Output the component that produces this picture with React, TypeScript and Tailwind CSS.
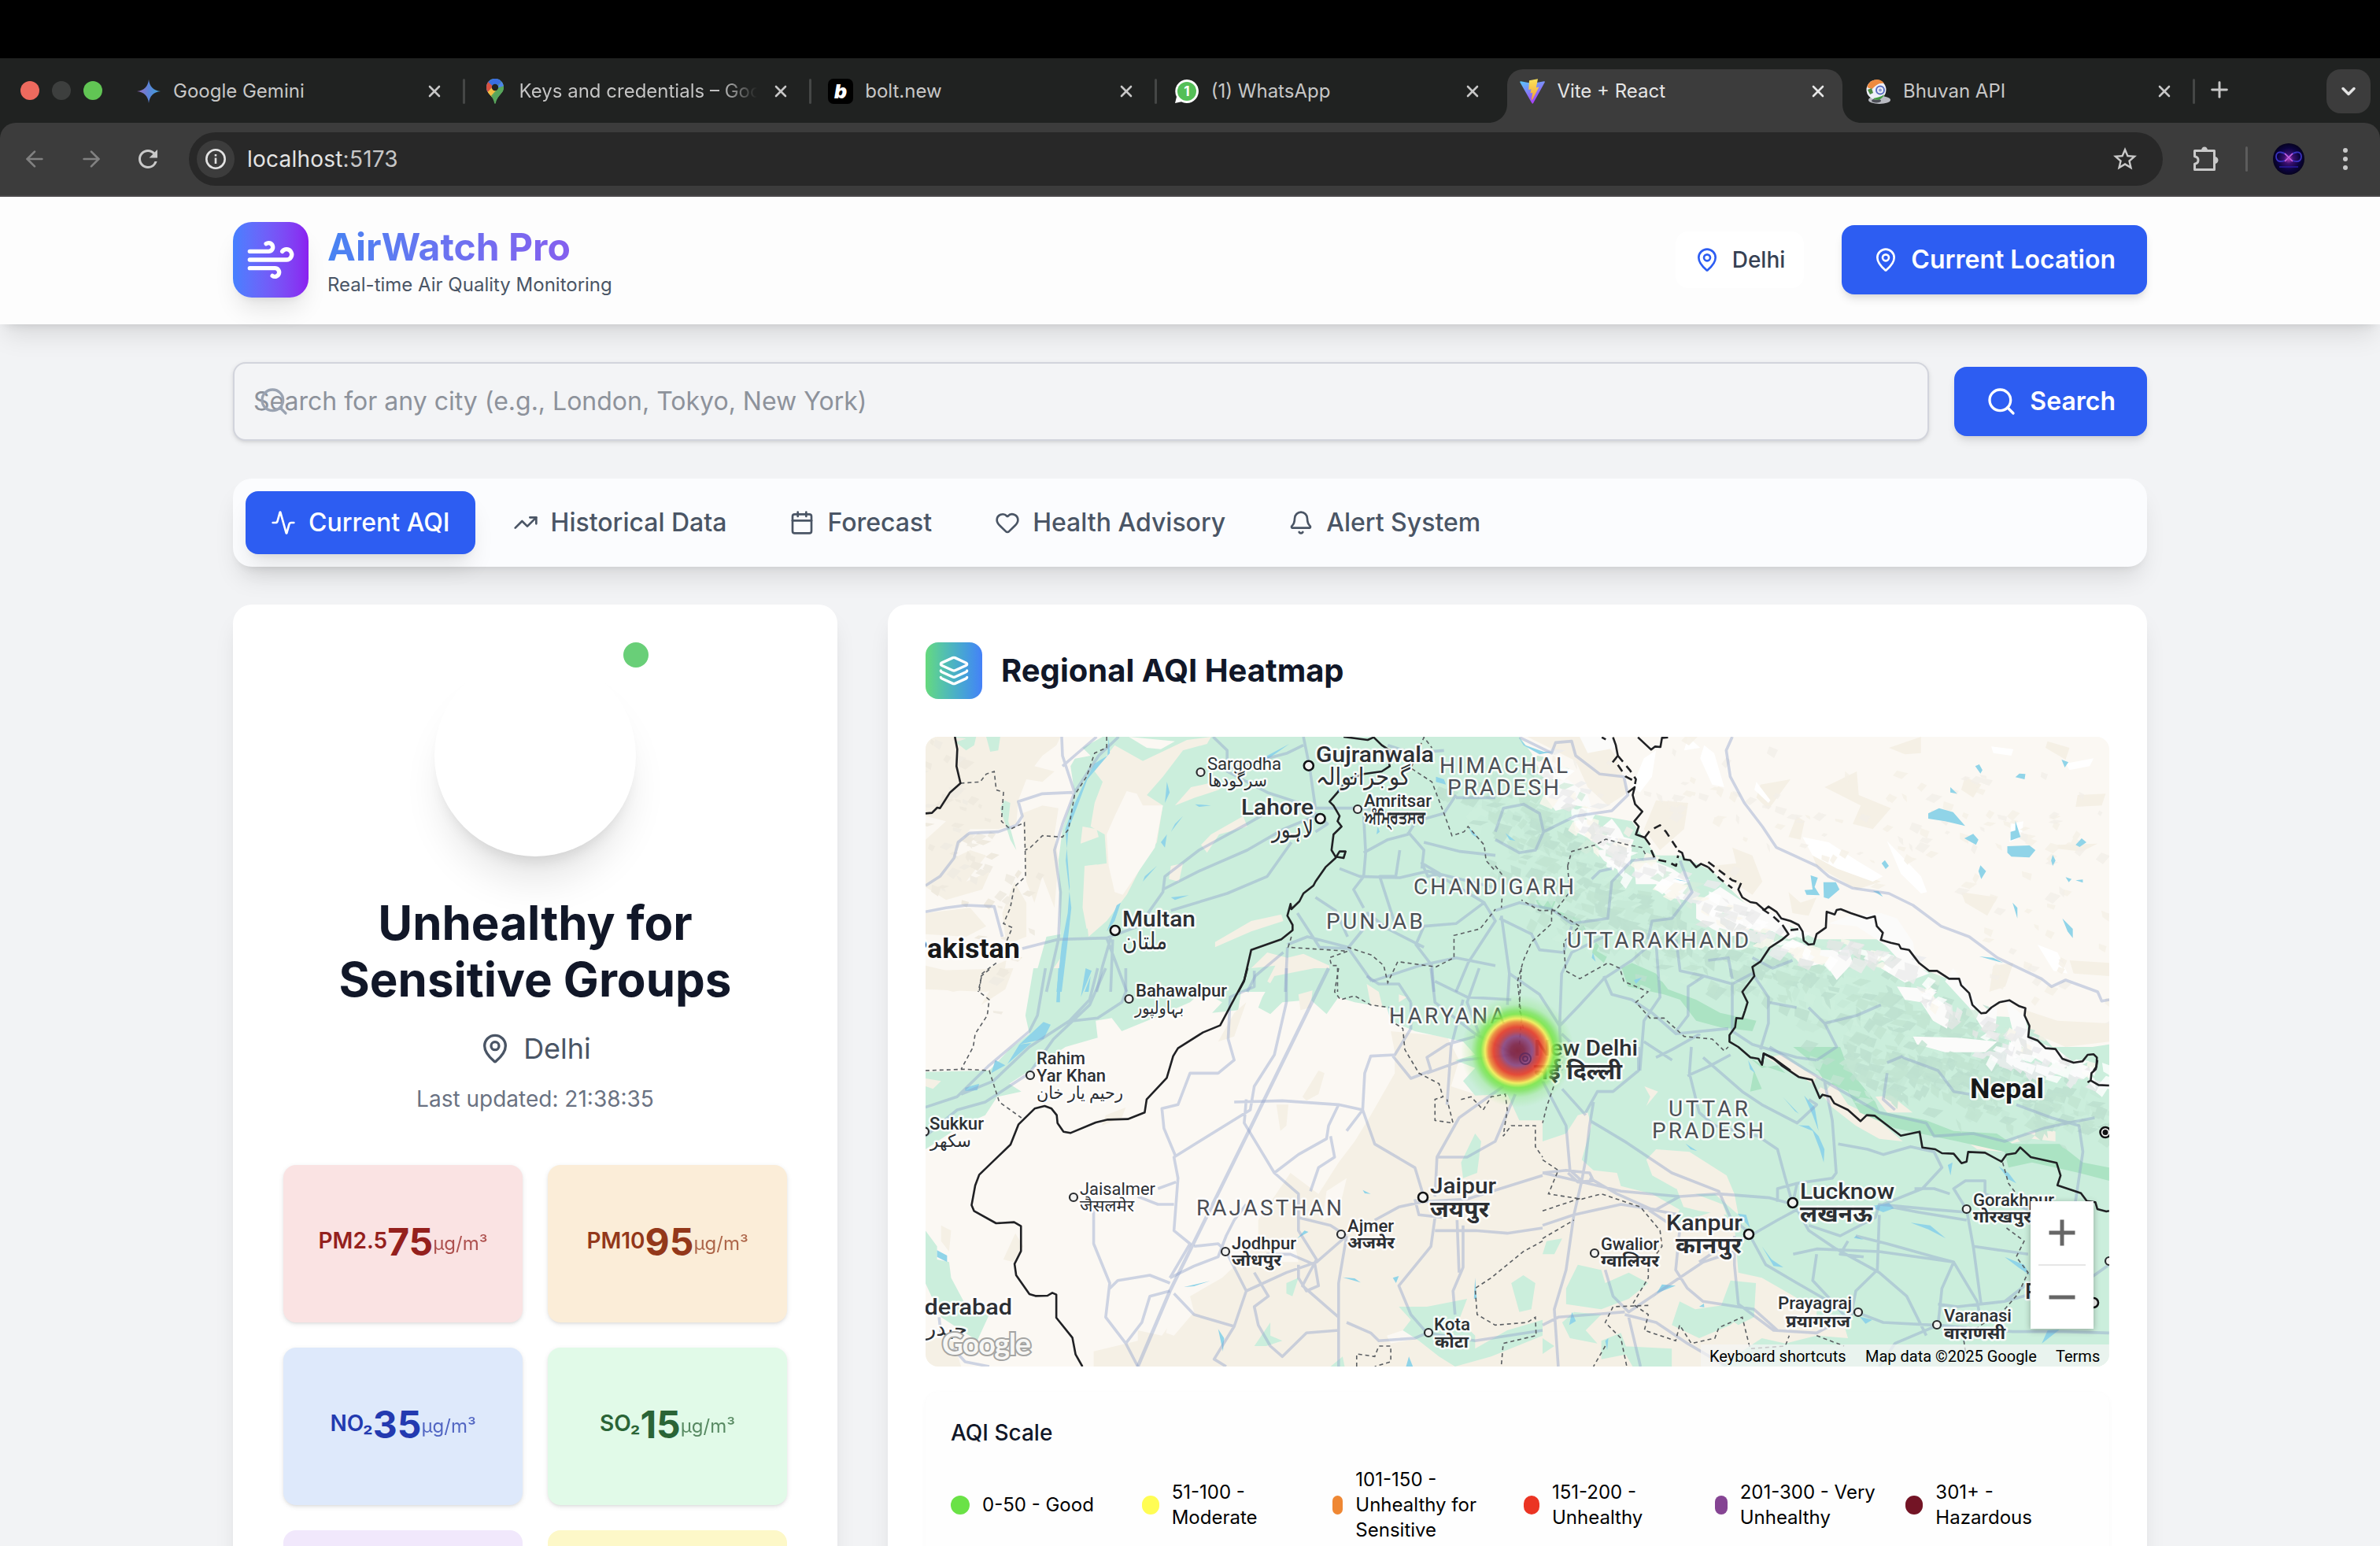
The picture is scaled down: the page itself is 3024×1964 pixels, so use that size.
import React from "react";
import {
  Activity,
  ArrowLeft,
  ArrowRight,
  Bell,
  Calendar,
  ChevronDown,
  Heart,
  Layers,
  MapPin,
  Plus,
  Search,
  TrendingUp,
  Wind,
  X,
} from "lucide-react";
import { MdRefresh, MdStarBorder } from "react-icons/md";

/* ------------------------------------------------------------------ */
/* Browser chrome                                                      */
/* ------------------------------------------------------------------ */

function GeminiIcon() {
  return (
    <svg viewBox="0 0 32 32" className="size-8">
      <defs>
        <linearGradient id="gem" x1="0" y1="0" x2="1" y2="0">
          <stop offset="0" stopColor="#9a6cc0" />
          <stop offset="0.5" stopColor="#5b84d8" />
          <stop offset="1" stopColor="#3fa3d8" />
        </linearGradient>
      </defs>
      <path d="M16 1C17 10 22 15 31 16C22 17 17 22 16 31C15 22 10 17 1 16C10 15 15 10 16 1Z" fill="url(#gem)" />
    </svg>
  );
}

function MapsIcon() {
  return (
    <svg viewBox="0 0 32 32" className="size-8">
      <clipPath id="pinclip">
        <path d="M16 0C9.6 0 5 4.8 5 11C5 15.500 7.500 18 10.500 21.500C13.500 25 14.500 28 15 30.500C15.300 32.300 16.700 32.300 17 30.500C17.500 28 18.500 25 21.500 21.500C24.500 18 27 15.500 27 11C27 4.800 22.400 0 16 0Z" />
      </clipPath>
      <g clipPath="url(#pinclip)">
        <rect width="32" height="32" fill="#58a55c" />
        <path d="M4 22L25 0H0V22Z" fill="#4d83ec" />
        <path d="M7 2L16 11L4 24H0V2Z" fill="#d95140" />
        <path d="M5 19L14 10L21 13L9 27Z" fill="#f2bd42" />
        <path d="M16 11L26 1L30 12L17 28L10 21Z" fill="#58a55c" opacity="0.95" />
        <path d="M5 19L12 11L18 14L9 24Z" fill="#f2bd42" />
        <path d="M7 4L16 12L25 3L16 -1Z" fill="#3a6ee0" />
        <path d="M18 12L25 3L28 9Z" fill="#4d83ec" />
      </g>
      <circle cx="16" cy="11" r="4.200" fill="#202221" />
    </svg>
  );
}

function BoltIcon() {
  return (
    <div className="flex size-8 items-center justify-center rounded-[7px] bg-black font-['Inter'] text-[25px] font-black text-white italic leading-none">
      b
    </div>
  );
}

function WhatsAppIcon() {
  return (
    <svg viewBox="0 0 32 32" className="size-8">
      <path d="M16 1A15 15 0 1 1 9 29.300L1 31L3 23A15 15 0 0 1 16 1Z" fill="#fff" />
      <circle cx="16" cy="16" r="12" fill="#54bf57" />
      <text x="16" y="22" textAnchor="middle" fontFamily="Inter" fontSize="17" fontWeight="700" fill="#fff">
        1
      </text>
    </svg>
  );
}

function ViteIcon() {
  return (
    <svg viewBox="0 0 32 32" className="size-8">
      <defs>
        <linearGradient id="viteA" x1="0" y1="0" x2="0.5" y2="1">
          <stop offset="0" stopColor="#58c8fb" />
          <stop offset="1" stopColor="#a93ef5" />
        </linearGradient>
        <linearGradient id="viteB" x1="0.5" y1="0" x2="0.5" y2="1">
          <stop offset="0" stopColor="#fbe35a" />
          <stop offset="1" stopColor="#f2a43a" />
        </linearGradient>
      </defs>
      <path d="M31.800 4.500L17 31.300C16.700 31.900 15.900 31.900 15.500 31.300L0.300 4.500C0 3.900 0.500 3.200 1.200 3.300L16 6L30.900 3.300C31.600 3.200 32.200 3.900 31.800 4.500Z" fill="url(#viteA)" />
      <path d="M23 0.200L12 2.300L11.300 14L14.500 13.300L13.500 18.500L16.300 17.700L14.800 26.500L16 26.800L24.500 10.500L20.800 11.200Z" fill="url(#viteB)" />
    </svg>
  );
}

function BhuvanIcon() {
  return (
    <svg viewBox="0 0 32 32" className="size-8">
      <ellipse cx="17" cy="27" rx="14" ry="5" fill="#b9bbc2" />
      <ellipse cx="13" cy="28" rx="6" ry="2.500" fill="#4b4d55" />
      <circle cx="13" cy="14" r="12.500" fill="#eef0f8" />
      <path d="M1.500 11A12 12 0 0 1 23 6C16 5 12 9 8 13L4 12Z" fill="#ee8a3e" />
      <path d="M2 14L7 12L9 18L5 20Z" fill="#4d8a44" />
      <path d="M9 25C14 24 19 23 23 20C20 28 12 28 9 25Z" fill="#3f9a3f" />
      <circle cx="18" cy="14.500" r="5" fill="none" stroke="#5a6ec0" strokeWidth="2" />
      <circle cx="18" cy="14.500" r="2" fill="#8d9bd8" />
    </svg>
  );
}

type Tab = { title: string; icon: React.ReactNode; active?: boolean; divider?: boolean };

const tabs: Tab[] = [
  { title: "Google Gemini", icon: <GeminiIcon />, divider: true },
  { title: "Keys and credentials – Goo", icon: <MapsIcon />, divider: true },
  { title: "bolt.new", icon: <BoltIcon />, divider: true },
  { title: "(1) WhatsApp", icon: <WhatsAppIcon /> },
  { title: "Vite + React", icon: <ViteIcon />, active: true },
  { title: "Bhuvan API", icon: <BhuvanIcon />, divider: true },
];

function BrowserTab({ tab }: { tab: Tab }) {
  return (
    <div className="flex h-[68px] w-[439.600px] shrink-0 items-center">
      <div
        className={
          tab.active
            ? "relative flex h-full w-[426px] items-center rounded-t-[20px] bg-[#3c3c3c] pr-[17px] pl-4 text-[#e6e6e6]"
            : "flex h-full w-[426px] items-center pr-[17px] pl-4 text-[#c7c7c7]"
        }
      >
        {tab.active && (
          <>
            <svg viewBox="0 0 24 24" className="absolute bottom-0 -left-6 size-6">
              <path d="M24 0V24H0C14 24 24 14 24 0Z" fill="#3c3c3c" />
            </svg>
            <svg viewBox="0 0 24 24" className="absolute -right-6 bottom-0 size-6">
              <path d="M0 0V24H24C10 24 0 14 0 0Z" fill="#3c3c3c" />
            </svg>
          </>
        )}
        <div className="-mt-3 size-8 shrink-0">{tab.icon}</div>
        <div
          className={
            tab.title.startsWith("Keys")
              ? "-mt-3 ml-[15px] w-[302px] overflow-hidden bg-gradient-to-r from-[#c7c7c7] from-85% to-transparent bg-clip-text text-[24px] leading-8 whitespace-nowrap text-transparent"
              : "-mt-3 ml-[15px] w-[302px] overflow-hidden text-[24px] leading-8 whitespace-nowrap"
          }
        >
          {tab.title}
        </div>
        <X className="-mt-3 ml-[18px] size-6 shrink-0" strokeWidth={2.600} />
      </div>
      {tab.divider && <div className="-mt-3 ml-[5px] h-8 w-[3px] rounded bg-[#454746]" />}
    </div>
  );
}

function BrowserChrome() {
  return (
    <div className="shrink-0 font-['Inter']">
      <div className="h-[74px] bg-black" />
      <div className="flex h-[82px] items-end bg-[#202221]">
        <div className="flex h-[82px] w-[157px] shrink-0 items-center gap-4 pl-[26px]">
          <div className="size-6 rounded-full bg-[#ed6a5e]" />
          <div className="size-6 rounded-full bg-[#3d3f3e]" />
          <div className="size-6 rounded-full bg-[#61c554]" />
        </div>
        {tabs.map((tab) => (
          <BrowserTab key={tab.title} tab={tab} />
        ))}
        <div className="flex h-[68px] flex-1 items-start justify-between pr-3">
          <Plus className="mt-[10px] ml-[9px] size-8 text-[#c7c7c7]" strokeWidth={2.200} />
          <div className="flex size-14 items-center justify-center rounded-[18px] bg-[#3c3c3c]">
            <ChevronDown className="size-7 text-[#e3e3e3]" strokeWidth={3} />
          </div>
        </div>
      </div>
      <div className="bg-[#202221]">
        <div className="flex h-[94px] items-center rounded-t-[20px] border-b-2 border-[#4a484a] bg-[#3c3c3c]">
          <ArrowLeft className="ml-7 size-8 text-[#818181]" strokeWidth={2} />
          <ArrowRight className="ml-10 size-8 text-[#818181]" strokeWidth={2} />
          <MdRefresh className="ml-[38px] size-9 text-[#c9c9c9]" />
          <div className="ml-[34px] flex h-[68px] w-[2508px] items-center rounded-full bg-[#282828] pr-[30px] pl-[10px]">
            <div className="flex size-12 items-center justify-center rounded-full bg-[#3c3c3c]">
              <svg viewBox="0 0 28 28" className="size-7" fill="none" stroke="#e3e3e3" strokeWidth="2.600">
                <circle cx="14" cy="14" r="11.700" />
                <path d="M14 12.500V20M14 8V10.600" />
              </svg>
            </div>
            <div className="ml-4 text-[28px] leading-9 tracking-[0.22px] text-[#c7c7c7]">
              <span className="text-[#e3e3e3]">localhost</span>:5173
            </div>
            <MdStarBorder className="ml-auto size-9 text-[#c9c9c9]" />
          </div>
          <svg viewBox="0 0 36 36" className="ml-[36px] size-9" fill="none">
            <path
              d="M4.500 7.500H29.500V31.500H4.500V24.200C7.200 23.800 9 22 9 19.500C9 17 7.200 15.200 4.500 14.800Z"
              stroke="#c9c9c9"
              strokeWidth="3"
              strokeLinejoin="round"
            />
            <path d="M13 7A4 4.500 0 0 1 21 7ZM30 15A4.500 4.500 0 0 1 30 24Z" fill="#c9c9c9" />
          </svg>
          <div className="ml-[33px] h-8 w-[3px] rounded bg-[#5c5c5c]" />
          <svg viewBox="0 0 40 40" className="ml-8 size-10">
            <defs>
              <radialGradient id="ava">
                <stop offset="0" stopColor="#b23fb5" />
                <stop offset="0.300" stopColor="#3a0f70" />
                <stop offset="0.700" stopColor="#0b0440" />
                <stop offset="1" stopColor="#06021f" />
              </radialGradient>
            </defs>
            <circle cx="20" cy="20" r="20" fill="url(#ava)" />
            <path d="M20 18C15 11 4 8 4 17C4 26 15 24 20 18C25 11 36 8 36 17C36 26 25 24 20 18Z" fill="none" stroke="#3a32c0" strokeWidth="1.800" />
            <path d="M15 23L25 13M15 13L25 23" stroke="#d05fd8" strokeWidth="1.600" />
            <path d="M8 30H32" stroke="#2a1aa0" strokeWidth="1.500" />
          </svg>
          <div className="ml-[49px] flex flex-col gap-[5px]">
            <div className="size-[6px] rounded-full bg-[#c9c9c9]" />
            <div className="size-[6px] rounded-full bg-[#c9c9c9]" />
            <div className="size-[6px] rounded-full bg-[#c9c9c9]" />
          </div>
        </div>
      </div>
    </div>
  );
}

/* ------------------------------------------------------------------ */
/* Map                                                                 */
/* ------------------------------------------------------------------ */

/* The map's vector data is stored in four sectors, each with its own grid. */
const NW = "translate(1100 760) scale(0.5102 0.33333)";
const NE = "translate(1900 900) scale(0.5102 0.33333)";
const SW = "translate(1160 1230) scale(0.5102 0.33333)";
const SE = "translate(1960 1330) scale(0.49745 0.33333)";

type Fill = { t: string; c: string; d: string };

const LAND = "#fbf8f3";
const SAND = "#f5f0e5";
const GREEN = "#cbeedc";
const FOREST = "#abe3c3";
const WATER = "#90d4e8";
const SNOW = "#fbfbfa";

const fills: Fill[] = [
  { t: NW, c: SAND, d: "M149,528 485,528 475,560 440,600 420,640 470,660 440,700 400,690 380,770 375,860 330,880 260,880 240,920 220,990 260,960 300,980 250,1080 310,1040 290,1110 200,1150 149,1100 149,920 200,850 149,830ZM390,820 440,790 480,800 470,900 480,1000 470,1180 440,1060 420,1160 400,1080ZM340,1200 370,1080 400,1160 400,1290 350,1320ZM149,1200 260,1180 300,1250 250,1290 149,1280ZM149,1400 260,1440 350,1380 340,1480 300,1500 149,1490Z" },
  { t: NW, c: GREEN, d: "M540,560 575,528 1568,528 1568,1500 690,1500 740,1460 800,1420 850,1440 830,1500 410,1500 430,1400 450,1290 485,1280 480,1000 490,880 520,740 510,640ZM220,528 275,528 270,560 250,580 225,550ZM300,528 335,528 330,580 310,585ZM345,770 360,780 355,850 375,960 360,920 335,800Z" },
  { t: NW, c: SAND, d: "M600,600 620,560 690,620 800,540 860,528 850,555 790,580 740,680 700,750 740,790 725,930 690,1010 650,1130 600,1230 555,1290 545,1170 560,1100 555,1020 600,1010 595,900 560,870 570,780 590,700 570,660Z" },
  { t: NW, c: LAND, d: "M600,900 620,830 650,735 675,745 690,790 740,790 720,950 640,1130 620,1120 605,1020ZM655,528 770,545 735,575 700,570ZM490,620 500,570 560,528 590,528 540,570 560,600ZM740,1460 800,1420 850,1440 830,1500 700,1500Z" },
  { t: NW, c: SAND, d: "M760,1020 790,1010 780,1080 755,1070ZM835,940 860,900 940,830 950,870 880,900 850,970ZM810,720 870,700 880,730 820,760 770,790ZM870,1310 960,1230 1035,1205 1040,1230 960,1270 870,1330ZM1050,1370 1090,1355 1155,1400 1150,1440 1080,1430 1020,1480 1000,1460 1020,1400 960,1410 1000,1350ZM540,870 575,880 580,910 535,935ZM545,1020 575,1015 600,1060 580,1240 550,1260 540,1180ZM455,1440 490,1360 485,1500 455,1450Z" },
  { t: SW, c: GREEN, d: "M300,0 630,0 700,20 740,60 690,130 600,190 520,240 495,190 455,200 460,265 380,300 330,350 240,440 270,470 210,490 180,560 120,600 31,690 31,395 190,390 240,310 290,250 280,180ZM670,0 870,0 820,60 810,160 745,170 770,130 690,60Z" },
  { t: SW, c: SAND, d: "M31,10 250,0 230,80 170,140 200,60 100,90 31,60ZM760,280 800,170 830,130 800,260ZM480,560 530,530 520,570 470,600ZM970,490 1010,390 1025,400 1010,480 980,505ZM905,520 935,520 930,600 915,620ZM70,980 95,1000 90,1080 70,1040ZM225,1110 255,1010 275,1060 250,1120Z" },
  { t: SW, c: SAND, d: "M1190,240 1330,260 1360,350 1340,450 1400,480 1480,490 1568,580 1568,1518 450,1518 450,1460 560,1420 560,1380 620,1400 690,1250 770,1180 860,1050 860,960 940,780 1010,860 1060,740 1100,660 1140,560 1170,480 1200,400 1200,320Z" },
  { t: SW, c: LAND, d: "M640,1330 690,1250 700,1310 650,1400 630,1390ZM890,1080 950,1040 960,1120 880,1120ZM1180,1400 1240,1370 1260,1410 1190,1430ZM1030,850 1080,800 1060,930 1020,960Z" },
  { t: SW, c: GREEN, d: "M870,110 900,30 1000,0 1568,0 1568,580 1510,580 1480,480 1400,485 1370,430 1400,380 1350,350 1400,330 1370,280 1250,240 1190,200 1180,150 1100,130 1060,110 1030,175 990,120 920,130 890,175 860,150ZM1365,740 1400,630 1415,660 1405,780 1370,800ZM930,1200 960,1180 945,1250 930,1240ZM1210,1290 1280,1290 1380,1260 1360,1340 1400,1400 1400,1450 1480,1380 1568,1340 1568,1400 1440,1480 1350,1518 1310,1480 1260,1420 1220,1380 1240,1340ZM1490,1200 1520,1170 1550,1200 1540,1300 1510,1310ZM850,1440 890,1350 890,1400 920,1420 880,1440ZM31,1000 60,1060 60,1110 90,1120 95,1180 130,1280 190,1320 160,1420 70,1330 31,1200ZM1040,1518 1070,1480 1075,1518Z" },
  { t: SW, c: SAND, d: "M960,100 995,85 990,150 965,160ZM1130,60 1160,90 1170,150 1140,140ZM1210,100 1230,110 1210,130ZM31,1400 100,1420 120,1518 31,1518ZM30,420 70,430 50,460 31,450Z" },
  { t: NE, c: GREEN, d: "M0,108 60,108 90,170 130,300 220,330 230,400 340,430 400,560 460,560 540,620 620,740 720,820 800,880 950,880 1040,980 1160,1050 1210,1170 1320,1180 1400,1310 1529,1280 1529,1380 0,1380Z" },
  { t: NE, c: SAND, d: "M400,350 480,360 470,460 410,540 370,460ZM590,530 640,560 665,660 640,710 570,640 540,600 600,590ZM820,300 900,240 905,330 985,380 940,460 890,440 910,370ZM660,290 735,270 680,385 650,340ZM790,560 860,600 960,660 900,690 800,600ZM1160,700 1250,720 1225,790 1170,740ZM1170,260 1210,290 1190,340 1160,310ZM1450,330 1520,325 1510,370 1445,375ZM1375,125 1430,150 1420,195 1370,150ZM1400,520 1500,515 1460,545 1400,535ZM980,150 1060,108 1060,170 1020,175ZM1320,1150 1400,1190 1529,1200 1529,1270 1420,1290 1330,1230ZM1430,960 1529,970 1529,1020 1440,1010ZM730,700 760,740 800,720 780,790 740,780ZM80,108 260,108 300,180 330,320 280,370 230,300 200,200ZM1240,980 1290,970 1270,1060 1230,1080ZM750,410 770,430 760,500 730,490Z" },
  { t: NE, c: "#ffffff", d: "M520,140 545,170 570,300 540,290 510,190ZM650,280 685,350 680,360 645,310ZM765,490 830,510 900,580 965,640 940,660 850,610 790,560ZM975,505 1010,560 1060,640 1075,700 1060,705 1010,630ZM1235,145 1290,155 1285,180 1240,170ZM1420,210 1490,190 1480,220 1430,235ZM1350,900 1400,930 1425,1010 1390,1000ZM1285,440 1315,430 1310,490 1280,510ZM480,108 510,150 470,160ZM370,190 400,160 390,260 360,320 340,300Z" },
  { t: SE, c: GREEN, d: "M0,0 1447,0 1447,1218 0,1218Z" },
  { t: SE, c: SAND, d: "M0,360 60,330 90,260 115,250 125,300 100,430 130,470 190,480 200,530 280,560 350,620 330,680 450,620 490,680 500,860 560,880 630,940 700,1000 700,1060 770,1060 780,1110 700,1100 620,1130 560,1110 450,1218 0,1218ZM265,430 290,390 375,400 470,490 490,560 500,640 440,560 390,560 340,540 280,490ZM340,530 390,560 460,600 470,640 400,625 360,610ZM260,150 295,170 265,225 275,190Z" },
  { t: SE, c: GREEN, d: "M60,920 90,830 150,850 160,900 220,860 270,900 220,960 150,1000 60,980ZM80,1010 150,1020 110,1080 140,1130 70,1110 50,1050ZM350,970 390,1000 480,980 530,1000 480,1060 400,1110 330,1060ZM150,1120 200,1090 220,1170 150,1190ZM10,740 50,730 30,790 0,790ZM480,890 545,900 540,1030 500,1060 450,1010ZM200,1140 330,1150 330,1218 230,1218ZM560,1140 640,1130 620,1218 540,1218ZM0,1110 30,1140 0,1170Z" },
  { t: SE, c: SAND, d: "M570,40 610,30 670,90 740,130 780,220 850,270 920,360 860,350 800,300 740,230 690,140ZM850,190 890,185 945,250 880,250ZM1060,335 1130,350 1175,400 1110,390ZM1190,370 1240,325 1310,320 1310,360 1250,350Z" },
  { t: SE, c: FOREST, d: "M640,0 760,0 780,80 850,210 860,245 980,280 1050,320 1160,330 1200,370 1320,370 1380,440 1447,460 1447,510 1370,480 1250,440 1190,460 1180,400 1060,360 900,310 810,250 780,170 720,130 690,60ZM540,90 560,160 530,170ZM520,30 560,80 600,70 620,100 560,70Z" },
  { t: NE, c: FOREST, d: "M315,990 340,970 400,1010 430,1070 500,1110 560,1160 650,1190 640,1230 560,1215 500,1190 460,1110 420,1090 330,1060ZM150,770 210,800 235,870 190,840ZM250,890 280,940 270,970 240,930ZM100,730 150,735 140,770 110,760ZM770,1290 830,1290 870,1380 800,1380Z" },
];

const snowfields =
  "M195,430 240,420 260,460 290,420 310,460 320,490 345,500 335,540 300,560 260,530 240,500 200,470ZM250,540 340,530 335,600 310,620 270,580ZM345,590 400,585 440,610 480,650 490,700 470,730 430,720 400,670 350,670ZM120,290 180,270 230,330 240,380 200,370 150,390 125,340ZM210,108 290,108 300,150 230,170ZM500,740 560,680 620,740 720,800 750,870 730,880 690,850 640,830 620,860 580,870 540,840 500,800ZM700,920 740,880 800,920 880,920 890,970 850,1035 820,970 790,980 760,980 740,930ZM830,820 880,790 960,780 1000,800 1040,890 1050,980 1080,1010 1020,1045 960,990 1000,950 970,900 900,830ZM1000,1060 1050,1065 1135,1140 1125,1220 1090,1190 1060,1120 1020,1110ZM1140,990 1170,1050 1210,1150 1250,1140 1245,1230 1215,1225 1180,1140 1120,1040ZM1040,1250 1150,1255 1250,1270 1220,1310 1120,1310 1050,1280ZM1270,1110 1320,1180 1330,1260 1400,1300 1440,1350 1400,1380 1330,1320 1270,1340 1290,1240Z";

const water: Fill[] = [
  { t: NW, c: WATER, d: "M605,528 602,600 570,630 545,700 518,790 497,880 503,1000 508,1100 503,1200 488,1320 475,1500 488,1500 502,1320 512,1180 498,1000 505,880 530,780 552,690 580,640 608,590ZM1055,555 1000,600 950,645 990,625ZM750,700 757,740 745,780ZM750,900 745,950 735,930ZM770,860 790,830 760,890ZM820,785 860,790 830,795ZM725,1020 690,1080 680,1120 695,1060ZM760,1140 805,1132 770,1150ZM560,1440 545,1500 555,1500ZM600,1270 625,1170 635,1160 620,1230ZM1420,680 1440,690 1445,710 1420,700ZM1500,870 1530,920 1510,900ZM1275,870 1280,890 1272,900Z" },
  { t: SW, c: WATER, d: "M362,0 357,130 366,130 368,0ZM430,0 418,110 445,10ZM325,205 343,215 325,270 265,290ZM265,290 295,285 235,365ZM205,350 230,370 195,400ZM130,455 165,440 160,465 130,468ZM60,1075 85,1095 85,1120 60,1100ZM975,1000 985,1005 957,1030ZM1120,845 1140,860 1125,858ZM675,1215 740,1192 700,1212ZM1070,1178 1100,1182 1115,1198ZM1195,1180 1210,1173 1203,1200ZM760,1375 775,1410 772,1460ZM1235,1480 1245,1518 1228,1518ZM1400,1180 1397,1260 1404,1260Z" },
  { t: NE, c: WATER, d: "M1078,400 1105,380 1140,395 1170,448 1120,430 1078,420ZM1275,525 1330,522 1345,540 1330,568 1285,565 1275,550ZM1295,428 1308,490 1283,503 1283,470 1295,465ZM1168,495 1190,478 1203,500 1197,520ZM1445,520 1460,495 1472,510 1455,528ZM817,662 848,662 857,690 830,725 818,720ZM785,636 803,645 795,680 808,712 775,710 770,692 790,690ZM1208,598 1222,620 1210,650 1203,620ZM1288,740 1300,760 1300,800ZM1412,800 1438,840 1438,875 1425,850ZM1195,220 1205,213 1213,235 1208,248ZM1295,262 1305,248 1320,250 1318,270ZM1410,195 1427,205 1418,225ZM1133,300 1150,325 1133,320ZM962,590 970,578 980,600 972,612ZM1205,945 1240,950 1265,970ZM1388,558 1395,580 1388,600 1384,580ZM1420,643 1435,650 1428,662ZM1445,655 1463,652 1463,664ZM940,695 955,697 965,718ZM58,110 75,140 120,165 145,165 110,175 70,140ZM25,475 50,505 35,500ZM243,930 250,965 240,950ZM345,1035 365,1025 350,1050ZM443,648 480,660 460,656Z" },
  { t: SE, c: WATER, d: "M653,298 680,300 705,340 720,390 718,440 708,390 690,320ZM668,185 695,230 705,320 690,260ZM613,190 655,255 645,245ZM845,605 885,595 898,615 870,630 845,615ZM498,635 520,640 530,690ZM365,368 395,397 378,390ZM560,760 585,810 615,840 590,835ZM400,990 412,978 413,992ZM810,1028 842,1040 825,1055ZM75,1010 85,1045 68,1060ZM160,1120 168,1110 165,1155ZM1165,455 1190,480 1210,520 1190,505ZM1035,450 1047,440 1042,490ZM1180,800 1230,830 1245,870 1215,840ZM1290,1080 1320,1078 1275,1130ZM800,720 820,735 795,728ZM940,670 990,680 1030,730 985,695ZM305,905 340,910 290,940 280,965ZM525,50 543,100 530,85Z" },
];

const roads: { t: string; d: string }[] = [
  { t: NW, d: "M149,1095 185,1060 220,990 230,930 258,895 330,890 375,865 390,830 380,775 440,745 515,740M149,1195 200,1180 250,1170 320,1175 340,1290M488,528 490,600 520,740 490,860 470,960 485,1120 480,1300 450,1500M575,528 520,600 490,640M630,528 580,600 520,740M390,1335 480,1300 600,1295 680,1250 740,1120 745,1060 830,960 950,860 1030,790 1120,820M740,1110 830,1040 950,960 1040,880 1120,830M610,1295 590,1400 575,1500M600,1295 650,1500M615,1300 610,1500M760,1190 900,1125 1000,1060 1060,930M865,528 900,580 900,660 1000,740 1120,800 1240,800 1300,820M1090,528 1105,640 1120,800M1090,560 1050,590 900,650M1180,1030 1230,1060 1330,1065 1400,1040 1560,1100M1240,830 1245,970 1240,1060 1215,1110 1240,1180M1240,970 1300,920 1350,900 1370,850M1350,890 1390,960 1385,1030M1390,930 1480,965 1568,980M1050,1320 1100,1290 1200,1330 1260,1460M1075,1200 1130,1330 1200,1335 1240,1260 1250,1200 1300,1260 1390,1330M1390,1250 1470,1240 1540,1160 1420,1050M1390,1250 1370,1320 1410,1400 1415,1500M1540,1160 1568,1230 1500,1390 1470,1500M1120,1140 1170,1190 1200,1290M950,1500 970,1440 1040,1350M1050,1330 1045,1500M1260,1460 1380,1400 1470,1370 1568,1400M1330,960 1320,1060 1280,1060 1320,1250M1470,750 1440,820 1370,850 1300,850M1470,760 1568,760M1300,560 1360,590 1440,580M1120,820 1150,860 1120,890M1385,1010 1430,1050 1400,1060Z" },
  { t: SW, d: "M330,0 310,180 290,240 190,370 110,490 31,530M460,0 440,120 390,200 290,300 200,430 120,480M530,0 530,90 520,130 460,190 400,200M480,0 440,140 350,270 290,400 180,510 110,540 31,640M930,0 930,130 900,330 850,450 840,540 650,720 660,800 650,1000 690,1050 640,1180M850,10 850,70 790,110 785,270 800,350 760,400 690,400 660,520 620,535 625,610 655,720M800,510 920,505 1060,520 1120,540 1150,670 1250,760 1270,860M830,500 825,590 900,780 960,860 960,1000 1005,1110 970,1210 1060,1330M900,780 960,710 1030,650 1035,600 1060,520M1040,640 1050,720 1010,760 990,850M1120,540 1125,400 1140,335 1200,330 1240,230 1240,130M1195,335 1240,420 1290,390 1280,340 1330,290 1400,260M1080,620 1120,540M610,840 655,815M560,870 610,900 650,900M450,900 450,1050 490,1200 480,1330 530,1430 560,1518M490,1220 510,1190 590,1170 640,1200M640,1180 700,1135 760,1100 780,1020 800,960 830,900M780,1080 830,1230 930,1160 1005,1120 1080,1020M850,1160 885,1250 850,1290 860,1360 890,1440 920,1480 980,1390 1060,1380M650,1240 700,1320 800,1365 830,1230M800,1365 750,1490 780,1518M530,1430 570,1350 590,1250 640,1230M1080,1020 1060,1200 1060,1380 1060,1518M1080,1350 1140,1390 1160,1420 1250,1410 1280,1390 1400,1420 1568,1380M1150,960 1210,910 1270,890 1380,880 1568,790M1300,950 1290,1060 1210,1210 1240,1320 1280,1390M1300,1000 1400,1000 1480,1010 1568,990M1355,960 1360,1160M1370,980 1370,1140 1345,1230 1350,1320M1300,870 1305,720 1360,570 1470,450M1305,720 1380,720 1450,660 1500,480M960,950 1040,980 1080,1020M880,1090 940,1090 1000,1130M700,1060 760,1050 780,1080M1290,0 1300,130 1400,250 1500,330M1410,0 1380,130 1410,250M1130,30 1160,60 1210,60 1240,130M1300,50 1380,110 1490,120M1370,120 1340,300 1330,520M1490,330 1370,350 1280,400M1250,880 1260,940 1320,950M100,1450 130,1500 190,1518M65,1330 70,1400M1000,1120 1010,1210 980,1230 960,1180 960,1130" },
  { t: NE, d: "M0,470 20,380 70,365 110,400 120,470 200,410 290,390 330,330 320,260 260,250 200,180 190,125 150,130 140,170 60,110M0,500 60,550 100,540 120,470M0,770 60,740 140,765 190,820 280,800 290,660 340,580 400,570M10,800 90,860 110,920 170,930 190,830M15,790 35,1010 110,1090 160,1210 165,1380M35,1010 30,1130M160,1210 165,1010 190,930 270,870M160,1210 210,1130 270,1030 340,960 400,880M270,1020 290,1090 340,1110 390,1160 450,1240 580,1220M460,580 490,700 440,800 390,810 380,880M400,890 410,1100 370,1190 360,1380M450,880 460,1000 520,1020 590,1050 640,1010M520,1020 480,1060 480,1170 450,1230M590,1050 590,1230 640,1280 750,1330 800,1340M640,950 690,990 740,960M640,1010 680,1100 680,1200 660,1300M680,1120 750,1140M960,1130 900,1170 820,1200 850,1290 800,1340M780,1140 820,1200M370,1270 440,1340M510,1240 440,1300 400,1330M530,960 580,950 590,1030M200,1290 165,1240M240,650 260,620 290,610" },
  { t: SE, d: "M0,130 60,300 70,470 100,510 80,640 60,850 30,1000 40,1218M130,210 120,300 110,430 100,510M245,0 245,90 180,170 140,170 110,250M50,160 110,260M0,480 60,500 200,550 350,570 450,560 580,575 640,600M120,280 215,365 330,480 450,550 480,650 530,710M380,0 375,100 400,250 440,300 550,340 600,390 620,500 635,580M410,40 510,170 560,220 650,290 700,220 680,200M370,110 430,70 480,30M580,0 720,130 740,280 750,480 740,500 650,520 640,590M755,370 830,390 870,410 940,380 1000,400 1020,460 970,540 870,600M720,130 860,250 980,290 1000,340 1100,330 1180,360 1280,310 1340,290 1410,270M530,720 600,660 650,620 680,700 750,770 860,860 930,950 980,1100M530,720 570,830 650,900 720,960 800,1010M490,720 490,830 500,980 590,1080 700,1090 800,1010M700,790 690,890 740,970 780,1040M640,790 700,770 860,780 1050,820 1110,970 1120,1050M680,680 760,720 850,650 860,600 1000,620 1083,630M860,640 855,850 800,930 790,1010M1083,620 1100,760 1120,980 1180,970 1240,900M1083,620 1050,540 1080,510 1130,510 1130,560 1240,620M800,720 880,750 1000,800 1050,820 1020,920 1010,1060M1010,1060 900,1130 860,1218M1010,1060 1200,1085 1330,1085 1447,1090M1010,980 1060,990 1180,970 1400,880 1447,830M800,1010 870,1050 1000,1060M0,680 80,640 200,600 290,620 350,570M270,620 350,700 340,850 370,920 410,970 540,1000 600,1080M160,850 180,950 220,1010 350,880 410,820 490,780M0,1060 40,1030 210,1010M210,1020 290,1050 370,1130 470,1218M220,1030 250,1218M530,720 460,760 400,820M880,100 870,200 900,240M920,40 1010,90 1050,170 1090,180M880,60 920,35M1210,220 1300,270 1370,300 1380,400 1370,500 1360,600M120,500 190,560 280,620 350,640M600,590 600,540 650,520M950,540 1000,540 1040,560M890,610 960,630 1083,660M1100,760 1240,790M780,740 760,790 820,800M0,480 60,470 120,480 130,510 90,515 65,480" },
];

const borders: { t: string; d: string }[] = [
  { t: NW, d: "M222,528 228,575 226,640 236,705 210,740 185,800 178,798 165,818 149,820M1190,528 1250,540 1265,530 1285,560 1305,580 1300,610 1305,640 1285,660 1240,670 1200,690 1175,740 1155,775 1165,790 1180,830 1175,850 1185,870 1165,900 1160,960 1170,985 1190,990 1195,965 1180,965 1170,990 1145,1025 1120,1080 1115,1095 1090,1125 1080,1155 1060,1185 1058,1165 1050,1210 1063,1245 1063,1265 1035,1300 960,1340 942,1460 928,1500" },
  { t: SW, d: "M833,0 825,45 765,218 722,245 660,305 648,335 632,418 582,500 577,550 535,575 485,577 455,588 392,628 375,623 360,590 358,560 345,535 328,525 303,535 263,595 243,672 165,787 155,828 146,903 152,925 207,972 252,968 269,983 269,1078 253,1127 257,1170 290,1242 305,1249 335,1248 347,1237 357,1244 357,1332 397,1408 405,1472 422,1518" },
  { t: NE, d: "M293,110 300,140 305,180 292,205M265,110 275,118M355,110 388,157 398,145 411,147 415,112 430,110M330,320 347,300 342,330 348,365 366,393 346,430 357,450 350,480 372,492 385,520M455,542 465,550 470,575 485,578 500,605 512,592 530,605M612,665 605,690 615,720 635,738 650,742 670,768 680,755 700,775 712,800 735,810 755,825 765,850 768,885 780,900 793,898 800,860 823,835 825,775 845,785 850,768 860,765 885,780 925,800 945,792 950,830 965,855 960,882 985,893 1005,900 1010,915 1030,920 1045,950 1055,970 1080,1000 1100,1000 1130,1030 1155,1030 1160,1055 1180,1085 1188,1130 1210,1162 1222,1160 1235,1140 1255,1120 1280,1112 1305,1135 1320,1142 1318,1170 1330,1210 1327,1252 1350,1265 1370,1295 1395,1298 1412,1335 1440,1350 1462,1345 1475,1320 1490,1318 1498,1330 1497,1365 1490,1380M715,825 730,860 715,880 683,912 660,965 640,985 645,1020 615,1080 628,1120 622,1150 615,1182 600,1180 597,1215 583,1245 583,1270 605,1290 635,1330 655,1335 664,1358 668,1315 690,1330 735,1380" },
  { t: SE, d: "M560,70 565,25 590,45 610,70 655,115 688,125 708,195 715,182 735,190 745,215 780,240 812,283 828,260 848,262 915,338 963,323 970,383 1003,390 1020,405 1050,407 1070,443 1083,437 1087,400 1130,403 1172,437 1185,410 1208,405 1220,383 1247,420 1313,442 1323,490 1315,527 1375,557 1390,587 1412,592 1417,618 1440,627 1447,625M1392,135 1400,128 1420,145 1447,147M1400,128 1402,100 1413,85 1417,50" },
];

const disputed = "M305,180 335,235 350,270 345,310M305,215 325,260 350,280M372,492 385,465 410,445 425,470 455,540M388,540 398,575 430,585 450,600 455,560M530,585 560,620 590,655 612,665M530,605 560,650 590,685M665,765 690,790 715,825M735,845 760,840";

const states: { t: string; d: string }[] = [
  { t: NW, d: "M236,705 285,700 300,670 320,660 325,730 343,740 338,850 360,880 395,855 397,960 398,1060 370,1100 360,1180 343,1240 365,1255 350,1310M600,528 600,570 570,590 550,680 520,750 505,880 490,910 440,905 410,950 397,960M325,1390 290,1430 280,1500M1060,1290 1052,1330 1150,1340 1200,1345 1155,1370 1160,1400 1175,1400 1175,1500M1200,1330 1260,1360 1290,1400 1300,1465 1325,1385 1420,1405 1465,1370 1465,1285 1530,1260 1568,1185M1360,650 1410,700 1440,820 1460,905 1490,890 1500,870 1540,940 1545,1000 1568,1040M1360,640 1390,530 1410,570" },
  { t: NE, d: "M180,600 190,545 250,520 275,498 330,520 365,530 375,560M180,600 185,700 150,770 110,770 65,730M140,770 140,820 90,890 70,960 55,1040 65,1180 60,1280M140,765 210,830 170,890 175,1000 210,1030 280,970 310,990 320,1040 380,1080 350,1120 385,1180 420,1180 470,1250 540,1260 570,1305 580,1290M0,600 20,640 15,760" },
  { t: SW, d: "M190,5 170,30 165,90 190,120 185,180 155,250 150,300 120,385M31,390 130,385 190,390 215,510 270,570M1060,0 1050,90 1065,120 1100,105 1140,140 1190,150 1190,200 1220,230 1225,310 1260,400 1310,440 1320,490 1300,500 1300,580 1345,590 1330,500M1365,500 1390,490 1420,540 1440,490 1475,480 1480,540 1470,640 1490,600 1550,600 1550,680 1568,720M1568,1040 1520,1080 1440,1180 1400,1220 1405,1320 1450,1360 1530,1350 1550,1330 1552,1400 1470,1430 1465,1518M1105,1518 1105,1470 1150,1480 1160,1440 1190,1440 1190,1500 1150,1518M1515,0 1510,150 1520,230" },
  { t: SE, d: "M40,100 10,230 0,290M0,430 40,470 15,560 100,580 150,560 250,610 300,700 305,760 270,830 270,880 230,980 270,1020 260,1080 340,1120 350,1060 380,1130 440,1110 450,1070 510,1030 530,1150 620,1140 630,1100M0,625 100,575M0,730 80,660M270,985 180,990 160,1050 200,1110 215,1218M1175,440 1190,520 1210,560M1185,690 1230,740 1210,800 1240,860 1215,940 1180,1000 1120,1060 1075,1110 1080,1160M160,1140 130,1218M700,1100 770,1140" },
];

/* Deterministic scatter of small facets used for shaded mountain relief. */
function facets(seed: number, ridge: [number, number][], spreadX: number, spreadY: number, count: number, size: number, palette: string[]) {
  let s = seed;
  const rnd = () => {
    s = (s * 1664525 + 1013904223) % 4294967296;
    return s / 4294967296;
  };
  const groups: Record<string, string> = {};
  for (let i = 0; i < count; i++) {
    const k = Math.floor(rnd() * (ridge.length - 1));
    const f = rnd();
    const x = ridge[k][0] + (ridge[k + 1][0] - ridge[k][0]) * f + (rnd() + rnd() - 1) * spreadX;
    const y = ridge[k][1] + (ridge[k + 1][1] - ridge[k][1]) * f + (rnd() + rnd() - 1) * spreadY;
    const w = size * (0.4 + rnd());
    const h = size * 1.6 * (0.4 + rnd());
    const skew = (rnd() - 0.5) * size;
    const c = palette[Math.floor(rnd() * palette.length)];
    groups[c] =
      (groups[c] || "") +
      `M${x.toFixed(0)},${y.toFixed(0)} ${(x + w).toFixed(0)},${(y + h * 0.3).toFixed(0)} ${(x + w * 0.5 + skew).toFixed(0)},${(y + h).toFixed(0)} ${(x - w * 0.3 + skew).toFixed(0)},${(y + h * 0.6).toFixed(0)}Z`;
  }
  return Object.entries(groups);
}

const snowRidge: [number, number][] = [[140, 180], [180, 330], [260, 480], [310, 560], [420, 650], [560, 770], [640, 830], [760, 900], [870, 900], [990, 930], [1080, 1080], [1210, 1180], [1300, 1270], [1480, 1360]];
const hillRidge: [number, number][] = [[0, 250], [70, 430], [160, 560], [220, 720], [380, 840], [560, 930], [740, 1010], [860, 1060], [960, 1160], [1100, 1260], [1300, 1340]];
const plateau: [number, number][] = [[330, 180], [560, 330], [800, 400], [1000, 500], [1200, 420], [1450, 500], [1300, 800], [1450, 1100]];

const hillRelief = [
  ...facets(31, plateau, 260, 240, 150, 20, ["#f5f0e6", "#f3efe8"]),
  ...facets(7, hillRidge, 180, 160, 620, 28, ["#c1e4d1", "#c6e9d7", "#bcdece", "#cdefdd"]),
];
const snowRelief = facets(3, snowRidge, 55, 65, 230, 28, ["#ffffff", "#ebebed", "#ececec", "#e3e6e5", "#d3ecdc", "#fbf8ee"]);

const nepalRelief = [
  ...facets(17, [[760, 40], [1000, 90], [1200, 170], [1400, 260]], 170, 130, 240, 28, ["#c1e4d1", "#c6e9d7", "#bcdece"]),
  ...facets(19, [[1130, 20], [1220, 60], [1330, 70], [1420, 120]], 50, 40, 50, 30, ["#ffffff", "#ebebee"]),
];
const westRelief = facets(23, [[180, 560], [250, 800], [200, 1000], [370, 1080], [340, 1440]], 90, 160, 70, 20, ["#efeadf", "#f0ece3"]);

type Label = {
  s: string;
  x: number;
  y: number;
  w?: number;
  size?: number;
  weight?: number;
  color?: string;
  spacing?: boolean;
  end?: boolean;
};

const S = { size: 22, weight: 500 };
const L = { size: 28, weight: 500 };
const R = { size: 28, weight: 400, color: "#4c4f55", spacing: true };

const labels: Label[] = [
  { s: "Sargodha", x: 1534, y: 978, w: 94, ...S, weight: 400 },
  { s: "سرگودھا", x: 1535, y: 999, w: 75, size: 22, weight: 400 },
  { s: "Gujranwala", x: 1672, y: 968, w: 150, ...L },
  { s: "گوجرانوالہ", x: 1672, y: 997, w: 120, size: 30, weight: 400 },
  { s: "Lahore", x: 1577, y: 1035, w: 92, ...L },
  { s: "لاہور", x: 1616, y: 1064, w: 53, size: 30, weight: 400 },
  { s: "Amritsar", x: 1733, y: 1025, w: 86, ...S },
  { s: "ਅੰਮ੍ਰਿਤਸਰ", x: 1734, y: 1046, w: 77, size: 22, weight: 700 },
  { s: "HIMACHAL", x: 1829, y: 982, w: 163, ...R },
  { s: "PRADESH", x: 1839, y: 1010, w: 142, ...R },
  { s: "CHANDIGARH", x: 1796, y: 1136, w: 204, ...R },
  { s: "PUNJAB", x: 1685, y: 1180, w: 123, ...R },
  { s: "UTTARAKHAND", x: 1991, y: 1204, w: 231, ...R },
  { s: "Multan", x: 1426, y: 1177, w: 93, ...L },
  { s: "ملتان", x: 1426, y: 1206, w: 57, size: 30, weight: 400 },
  { s: "Pakistan", x: 1296, y: 1217, w: 141, size: 35, weight: 700, color: "#17181a", end: true },
  { s: "Bahawalpur", x: 1443, y: 1266, w: 116, ...S },
  { s: "بہاولپور", x: 1442, y: 1288, w: 62, size: 22, weight: 400 },
  { s: "HARYANA", x: 1765, y: 1300, w: 147, ...R },
  { s: "Rahim", x: 1317, y: 1352, w: 62, ...S },
  { s: "Yar Khan", x: 1317, y: 1374, w: 88, ...S },
  { s: "رحیم یار خان", x: 1317, y: 1396, w: 110, size: 22, weight: 400 },
  { s: "Sukkur", x: 1181, y: 1435, w: 69, ...S },
  { s: "سکھر", x: 1182, y: 1457, w: 52, size: 22, weight: 400 },
  { s: "Jaisalmer", x: 1372, y: 1518, w: 96, ...S, weight: 400 },
  { s: "जैसलमेर", x: 1372, y: 1539, w: 69, size: 21, weight: 400 },
  { s: "RAJASTHAN", x: 1520, y: 1544, w: 185, ...R },
  { s: "Ajmer", x: 1712, y: 1565, w: 59, ...S },
  { s: "अजमेर", x: 1712, y: 1586, w: 60, size: 21, weight: 700 },
  { s: "Jodhpur", x: 1565, y: 1587, w: 82, ...S },
  { s: "जोधपुर", x: 1565, y: 1608, w: 63, size: 21, weight: 700 },
  { s: "Jaipur", x: 1817, y: 1516, w: 84, ...L },
  { s: "जयपुर", x: 1817, y: 1546, w: 75, size: 28, weight: 700 },
  { s: "Kota", x: 1822, y: 1690, w: 46, ...S },
  { s: "कोटा", x: 1823, y: 1712, w: 43, size: 21, weight: 700 },
  { s: "Hyderabad", x: 1286, y: 1670, w: 148, ...L, end: true },
  { s: "حيدر", x: 1176, y: 1697, w: 53, size: 26, weight: 400 },
  { s: "New Delhi", x: 1949, y: 1341, w: 132, ...L },
  { s: "नई दिल्ली", x: 1949, y: 1371, w: 112, size: 28, weight: 700 },
  { s: "UTTAR", x: 2120, y: 1418, w: 101, ...R },
  { s: "PRADESH", x: 2099, y: 1446, w: 142, ...R },
  { s: "Nepal", x: 2503, y: 1395, w: 94, size: 35, weight: 700, color: "#17181a" },
  { s: "Lucknow", x: 2287, y: 1523, w: 120, ...L },
  { s: "लखनऊ", x: 2287, y: 1552, w: 92, size: 28, weight: 700 },
  { s: "Kanpur", x: 2117, y: 1563, w: 97, ...L },
  { s: "कानपुर", x: 2129, y: 1592, w: 84, size: 28, weight: 700 },
  { s: "Gwalior", x: 2034, y: 1588, w: 74, ...S },
  { s: "ग्वालियर", x: 2034, y: 1609, w: 74, size: 21, weight: 700 },
  { s: "Gorakhpur", x: 2507, y: 1532, w: 103, ...S },
  { s: "गोरखपुर", x: 2507, y: 1553, w: 74, size: 21, weight: 700 },
  { s: "Prayagraj", x: 2259, y: 1663, w: 94, ...S },
  { s: "प्रयागराज", x: 2269, y: 1686, w: 82, size: 21, weight: 700 },
  { s: "Varanasi", x: 2470, y: 1679, w: 86, ...S },
  { s: "वाराणसी", x: 2470, y: 1701, w: 78, size: 21, weight: 700 },
  { s: "Patna", x: 2573, y: 1650, ...L },
];

const smallDots: [number, number][] = [[1525.5, 981], [1725, 1028], [1434.5, 1269], [1309, 1366], [1175, 1437.5], [1364, 1521], [1704, 1568], [1557, 1590], [1815, 1693], [2026, 1592], [2498.7, 1536], [2361, 1667], [2461, 1683], [2680, 1602]];
const bigDots: [number, number][] = [[1662.8, 972.7], [1677.6, 1040], [1416.8, 1182], [1808, 1521], [2277.8, 1528], [2222, 1568], [2660, 1655]];

function RegionMap() {
  return (
    <svg viewBox="1176 936 1504 800" className="h-[800px] w-[1504px]" fontFamily="Roboto, 'Noto Sans', 'DejaVu Sans', sans-serif">
      <defs>
        <radialGradient id="heat">
          <stop offset="0" stopColor="#80203c" stopOpacity="0.95" />
          <stop offset="0.120" stopColor="#80254a" stopOpacity="0.93" />
          <stop offset="0.260" stopColor="#8a4280" stopOpacity="0.9" />
          <stop offset="0.340" stopColor="#c23c44" stopOpacity="0.92" />
          <stop offset="0.420" stopColor="#e63c2a" stopOpacity="0.92" />
          <stop offset="0.510" stopColor="#ef8a38" stopOpacity="0.92" />
          <stop offset="0.570" stopColor="#f4ee58" stopOpacity="0.92" />
          <stop offset="0.650" stopColor="#7de64a" stopOpacity="0.9" />
          <stop offset="0.710" stopColor="#74e24c" stopOpacity="0.72" />
          <stop offset="0.820" stopColor="#7ae25c" stopOpacity="0.25" />
          <stop offset="1" stopColor="#7ae25c" stopOpacity="0" />
        </radialGradient>
      </defs>
      <rect x="1176" y="936" width="1504" height="800" fill={LAND} />
      {fills.map((f, i) => (
        <path key={i} transform={f.t} d={f.d} fill={f.c} />
      ))}
      <g transform={NW}>
        {westRelief.map(([c, d]) => (
          <path key={c} d={d} fill={c} />
        ))}
      </g>
      <g transform={NE}>
        {hillRelief.map(([c, d], i) => (
          <path key={i} d={d} fill={c} opacity="0.8" />
        ))}
        <path d={snowfields} fill={SNOW} />
        {snowRelief.map(([c, d], i) => (
          <path key={i} d={d} fill={c} opacity="0.8" />
        ))}
      </g>
      <g transform={SE}>
        {nepalRelief.map(([c, d], i) => (
          <path key={i} d={d} fill={c} opacity="0.8" />
        ))}
      </g>
      {water.map((f, i) => (
        <path key={i} transform={f.t} d={f.d} fill={f.c} />
      ))}
      <g fill="none" stroke="#8c9fcb" strokeOpacity="0.42" strokeWidth="3.600" strokeLinejoin="round">
        {roads.map((r, i) => (
          <path key={i} transform={r.t} d={r.d} vectorEffect="non-scaling-stroke" />
        ))}
        <path
          transform={SW}
          d="M1035,0 840,610 640,1230 560,1518"
          vectorEffect="non-scaling-stroke"
          strokeWidth="4.500"
        />
        <path
          transform={NE}
          d="M590,108 575,160 585,260 620,360 665,450 700,530 800,600 830,640 890,685 980,705 1040,750 1110,830 1180,870 1250,950 1360,1030 1385,1060 1420,1035 1500,1080 1510,1115 1529,1110"
          vectorEffect="non-scaling-stroke"
        />
      </g>
      <g fill="none" stroke="#5a5e62" strokeWidth="1.600" strokeDasharray="5 4">
        {states.map((r, i) => (
          <path key={i} transform={r.t} d={r.d} vectorEffect="non-scaling-stroke" />
        ))}
      </g>
      <g fill="none" stroke="#202124" strokeWidth="2.600" strokeLinejoin="round">
        {borders.map((r, i) => (
          <path key={i} transform={r.t} d={r.d} vectorEffect="non-scaling-stroke" />
        ))}
        <path transform={NE} d={disputed} vectorEffect="non-scaling-stroke" strokeDasharray="10 7" />
      </g>
      <g fill="#f3f3f1" stroke="#2a2c2f" strokeWidth="2.200">
        {smallDots.map(([x, y]) => (
          <circle key={`${x}-${y}`} cx={x} cy={y} r="5" />
        ))}
      </g>
      <g fill="#f3f3f1" stroke="#111214" strokeWidth="2.600">
        {bigDots.map(([x, y]) => (
          <circle key={`${x}-${y}`} cx={x} cy={y} r="6" />
        ))}
        <circle cx="2675" cy="1438.500" r="6.500" />
      </g>
      <circle cx="2675" cy="1438.500" r="3.500" fill="#111214" />
      {labels.map((l, i) => (
        <text
          key={i}
          x={l.x}
          y={l.y}
          fontSize={l.size}
          fontWeight={l.weight}
          fill={l.color || "#2c2f33"}
          stroke="#ffffff"
          strokeOpacity="0.85"
          strokeWidth="5"
          strokeLinejoin="round"
          paintOrder="stroke"
          textAnchor={l.end ? "end" : "start"}
          textLength={l.w}
          lengthAdjust={l.spacing ? "spacing" : "spacingAndGlyphs"}
        >
          {l.s}
        </text>
      ))}
      <circle cx="1928" cy="1335" r="72" fill="url(#heat)" />
      <g fill="none" stroke="#5c2a5e" strokeWidth="2" opacity="0.8">
        <circle cx="1938" cy="1345" r="7" />
        <circle cx="1938" cy="1345" r="3" />
      </g>
      <text
        x="1197"
        y="1721"
        fontFamily="Lato, sans-serif"
        fontSize="38"
        fontWeight="700"
        fill="#f7f7f5"
        stroke="#a4a4a2"
        strokeWidth="4"
        paintOrder="stroke"
        textLength="113"
      >
        Google
      </text>
    </svg>
  );
}

function HeatMap() {
  return (
    <div className="relative mt-12 h-[800px] w-[1504px] overflow-hidden rounded-2xl">
      <RegionMap />
      <div className="absolute right-5 bottom-12 flex h-[162px] w-20 flex-col items-center bg-white shadow-[0_2px_8px_rgba(0,0,0,0.3)]">
        <svg viewBox="0 0 80 80" className="size-20" stroke="#666" strokeWidth="5">
          <path d="M23.500 40H56.500M40 23.500V56.500" />
        </svg>
        <div className="h-[2px] w-[60px] bg-[#e6e6e6]" />
        <svg viewBox="0 0 80 80" className="size-20" stroke="#666" strokeWidth="5">
          <path d="M23.500 40H56.500" />
        </svg>
      </div>
      <div className="absolute right-0 bottom-0 flex h-7 w-[519px] items-center bg-[#f5f5f5]/70 pt-[2px] pl-[11px] font-['Roboto'] text-[20px] leading-[26px] whitespace-nowrap text-black">
        <span className="w-[198px]">Keyboard shortcuts</span>
        <span className="w-[242px]">Map data ©2025 Google</span>
        <span>Terms</span>
      </div>
    </div>
  );
}

/* ------------------------------------------------------------------ */
/* Page                                                                */
/* ------------------------------------------------------------------ */

function Header() {
  return (
    <header className="relative z-10 h-[162px] shrink-0 bg-[#fdfdfd] shadow-[0_20px_30px_-6px_rgba(0,0,0,0.1),0_8px_12px_-8px_rgba(0,0,0,0.12)]">
      <div className="mx-auto flex h-40 w-[2432px] items-center justify-between">
        <div className="flex items-center gap-6">
          <div className="flex size-24 items-center justify-center rounded-3xl bg-gradient-to-r from-[#4580ff] to-[#8a1ff0] shadow-[0_20px_30px_-6px_rgba(0,0,0,0.1),0_8px_12px_-8px_rgba(0,0,0,0.1)]">
            <Wind className="size-16 text-white" />
          </div>
          <div>
            <h1 className="bg-gradient-to-r from-[#4683f2] to-[#8b58ee] bg-clip-text text-5xl leading-[64px] font-bold text-transparent">
              AirWatch Pro
            </h1>
            <p className="text-2xl leading-8 text-[#4a5565]">Real-time Air Quality Monitoring</p>
          </div>
        </div>
        <div className="flex items-center gap-12">
          <div className="flex h-[72px] items-center gap-4 rounded-2xl bg-white px-6 text-[28px] leading-10 font-medium text-[#364153]">
            <MapPin className="size-8 text-[#2d5df2]" />
            Delhi
          </div>
          <button className="flex h-[88px] items-center gap-4 rounded-2xl bg-[#2d5df2] px-10 text-[32px] leading-[48px] font-semibold text-white shadow-[0_8px_12px_-2px_rgba(0,0,0,0.1),0_4px_8px_-4px_rgba(0,0,0,0.1)]">
            <MapPin className="size-8" />
            Current Location
          </button>
        </div>
      </div>
    </header>
  );
}

function SearchRow() {
  return (
    <div className="flex items-center gap-8">
      <div className="relative flex h-[100px] flex-1 items-center rounded-2xl border-2 border-[#d2d4dc] bg-[#f3f4f6] px-6 text-[32px] leading-[48px] text-[#8d929b] shadow-[0_2px_6px_rgba(0,0,0,0.1),0_2px_4px_-2px_rgba(0,0,0,0.1)]">
        Search for any city (e.g., London, Tokyo, New York)
        <Search className="absolute top-7 left-[30px] size-10 text-[#9aa3b2]" />
      </div>
      <button className="flex h-[88px] items-center gap-4 rounded-2xl bg-[#2d5df2] px-10 text-[32px] leading-[48px] font-semibold text-white shadow-[0_8px_12px_-2px_rgba(0,0,0,0.1),0_4px_8px_-4px_rgba(0,0,0,0.1)]">
        <Search className="size-10" />
        Search
      </button>
    </div>
  );
}

const navItems = [
  { label: "Current AQI", Icon: Activity },
  { label: "Historical Data", Icon: TrendingUp },
  { label: "Forecast", Icon: Calendar },
  { label: "Health Advisory", Icon: Heart },
  { label: "Alert System", Icon: Bell },
];

function NavTabs() {
  return (
    <nav className="mt-12 flex h-28 items-center gap-4 rounded-3xl bg-[#fbfcfe] px-4 shadow-[0_20px_30px_-6px_rgba(0,0,0,0.1),0_8px_12px_-8px_rgba(0,0,0,0.1)]">
      {navItems.map(({ label, Icon }, i) => (
        <div
          key={label}
          className={
            i === 0
              ? "flex h-20 items-center gap-4 rounded-2xl bg-[#2d5df2] px-8 text-[32px] leading-[48px] font-medium text-white shadow-[0_20px_30px_-6px_rgba(0,0,0,0.1),0_8px_12px_-8px_rgba(0,0,0,0.1)]"
              : "flex h-20 items-center gap-4 rounded-2xl px-8 text-[32px] leading-[48px] font-medium text-[#4a5565]"
          }
        >
          <Icon className="size-8" />
          {label}
        </div>
      ))}
    </nav>
  );
}

const pollutants = [
  { name: "PM2.5", value: "75", tone: "bg-[#fae3e3] text-[#94201d]" },
  { name: "PM10", value: "95", tone: "bg-[#fbedd8] text-[#93381a]" },
  { name: "NO₂", value: "35", tone: "bg-[#dee9fb] text-[#233ab0]" },
  { name: "SO₂", value: "15", tone: "bg-[#e1fae8] text-[#2a6436]" },
];

function AqiCard() {
  return (
    <section className="w-[768px] rounded-3xl bg-white px-16 pt-16 shadow-[0_20px_30px_-6px_rgba(0,0,0,0.1),0_8px_12px_-8px_rgba(0,0,0,0.1)]">
      <div className="relative mx-auto size-64 rounded-full bg-white shadow-[0_40px_50px_-10px_rgba(0,0,0,0.1),0_16px_20px_-12px_rgba(0,0,0,0.12)]">
        <div className="absolute -top-4 -right-4 size-8 rounded-full bg-[#69cf78]" />
      </div>
      <h2 className="mt-12 text-center text-6xl leading-[72px] font-bold text-[#111728]">
        Unhealthy for
        <br />
        Sensitive Groups
      </h2>
      <div className="mt-6 flex items-center justify-center gap-4 text-4xl leading-[56px] text-[#4a5565]">
        <MapPin className="size-10" />
        Delhi
      </div>
      <p className="mt-4 text-center text-[28px] leading-10 text-[#6a7282]">Last updated: 21:38:35</p>
      <div className="mt-16 grid grid-cols-2 gap-8">
        {pollutants.map((p) => (
          <div
            key={p.name}
            className={`${p.tone} flex h-[200px] items-center justify-center rounded-2xl shadow-[0_2px_6px_rgba(0,0,0,0.1),0_2px_4px_-2px_rgba(0,0,0,0.1)]`}
          >
            <span className="mb-2 text-[28px] leading-10 font-semibold">{p.name}</span>
            <span className="mb-1 text-5xl leading-[64px] font-bold">{p.value}</span>
            <span className="text-2xl leading-8 opacity-75">μg/m³</span>
          </div>
        ))}
        <div className="h-[200px] rounded-2xl bg-[#f1e8fc]" />
        <div className="h-[200px] rounded-2xl bg-[#fdf8c8]" />
      </div>
    </section>
  );
}

const scale = [
  { dot: "w-6 bg-[#6ae246]", lines: ["0-50 - Good"] },
  { dot: "w-[22px] bg-[#fffd54]", lines: ["51-100 -", "Moderate"] },
  { dot: "w-[13px] bg-[#ef8733]", lines: ["101-150 -", "Unhealthy for", "Sensitive"] },
  { dot: "w-5 bg-[#eb3423]", lines: ["151-200 -", "Unhealthy"] },
  { dot: "w-4 bg-[#854493]", lines: ["201-300 - Very", "Unhealthy"] },
  { dot: "w-[22px] bg-[#731425]", lines: ["301+ -", "Hazardous"] },
];

function HeatmapCard() {
  return (
    <section className="w-[1600px] rounded-3xl bg-white p-12 shadow-[0_20px_30px_-6px_rgba(0,0,0,0.1),0_8px_12px_-8px_rgba(0,0,0,0.1)]">
      <div className="flex items-center gap-6">
        <div className="flex size-[72px] items-center justify-center rounded-2xl bg-gradient-to-r from-[#66d97c] to-[#4580f8]">
          <Layers className="size-10 text-white" />
        </div>
        <h3 className="text-[40px] leading-[56px] font-bold text-[#111728]">Regional AQI Heatmap</h3>
      </div>
      <HeatMap />
      <div className="mt-8 rounded-2xl bg-[#fefefe] p-8 shadow-[0_2px_6px_rgba(0,0,0,0.035)]">
        <h4 className="text-[28px] leading-10 font-medium text-[#111728]">AQI Scale</h4>
        <div className="mt-6 grid grid-cols-6 gap-4">
          {scale.map((s) => (
            <div key={s.lines.join(" ")} className="flex items-center gap-4">
              <div className={`${s.dot} h-6 shrink-0 rounded-full`} />
              <div className="text-2xl leading-8 whitespace-nowrap text-black">
                {s.lines.map((line) => (
                  <div key={line}>{line}</div>
                ))}
              </div>
            </div>
          ))}
        </div>
      </div>
    </section>
  );
}

export default function App() {
  return (
    <div className="flex h-[1964px] w-[3024px] flex-col overflow-hidden bg-[#f2f3f5] font-['Inter']">
      <BrowserChrome />
      <Header />
      <main className="mx-auto h-[1552px] w-[2432px] shrink-0 pt-12">
        <SearchRow />
        <NavTabs />
        <div className="mt-12 flex items-stretch gap-16">
          <AqiCard />
          <HeatmapCard />
        </div>
      </main>
    </div>
  );
}
